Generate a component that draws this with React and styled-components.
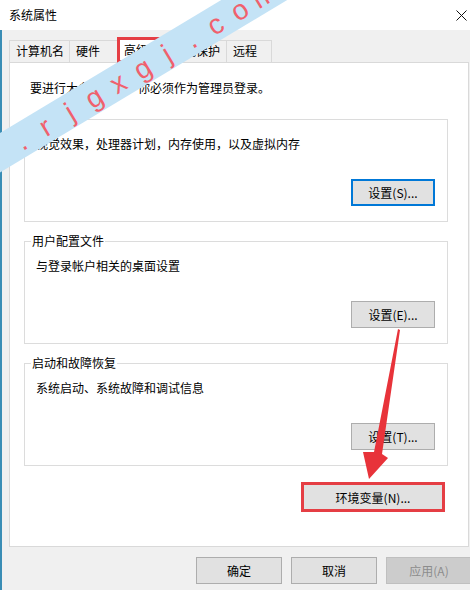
import React from 'react';
import styled, { createGlobalStyle, css } from 'styled-components';

const FONT = `"Noto Sans CJK SC", "Noto Sans", sans-serif`;

const Global = createGlobalStyle`
  html, body { margin: 0; padding: 0; background: #f0f0f0; }
  body { font-family: ${FONT}; }
`;

const Window = styled.div`
  position: relative;
  width: 470px;
  height: 590px;
  overflow: hidden;
  background: #f0f0f0;
  font-family: ${FONT};
  font-size: 12px;
  color: #000;
`;

const TitleBar = styled.div`
  box-sizing: border-box;
  height: 30px;
  background: #fff;
  display: flex;
  align-items: center;
  justify-content: space-between;
  padding: 0 3px 0 9px;
`;

const Title = styled.span`
  font-size: 12px;
  line-height: 16px;
`;

const Body = styled.div`
  box-sizing: border-box;
  height: 560px;
  padding: 7px 0 0 9px;
  box-shadow: inset 2px 0 0 #3a8db5;
`;

const TabRow = styled.div`
  display: flex;
  align-items: flex-end;
  height: 25px;
`;

const Tab = styled.div`
  box-sizing: border-box;
  position: relative;
  flex: none;
  width: ${(p) => p.$w}px;
  height: ${(p) => (p.$active ? 26 : 22)}px;
  margin-right: -1px;
  margin-bottom: ${(p) => (p.$active ? -1 : 0)}px;
  border: 1px solid #d9d9d9;
  border-bottom: none;
  background: ${(p) => (p.$active ? '#fff' : '#f0f0f0')};
  padding: ${(p) => (p.$active ? '2px 0 0 6px' : '0 0 0 6px')};
  line-height: 20px;
  white-space: nowrap;
  z-index: ${(p) => (p.$active ? 2 : 1)};
  ${(p) =>
    p.$marked &&
    css`
      &::after {
        content: '';
        position: absolute;
        left: -1px;
        top: -1px;
        right: -1px;
        bottom: 0;
        border: 3px solid #e53e44;
      }
    `}
`;

const Panel = styled.div`
  box-sizing: border-box;
  position: relative;
  z-index: 1;
  width: 460px;
  height: 485px;
  background: #fff;
  border: 1px solid #d9d9d9;
  padding-top: 17px;
`;

const Notice = styled.div`
  padding-left: 20px;
  line-height: 16px;
  white-space: nowrap;
`;

const Group = styled.fieldset`
  box-sizing: border-box;
  width: 424px;
  min-width: 0;
  margin: ${(p) => (p.$first ? 15 : 11)}px 0 0 14px;
  padding: 0;
  border: 1px solid #dcdcdc;
`;

const Legend = styled.legend`
  margin-left: 6px;
  padding: 0 1px;
  line-height: 16px;
  font-size: 12px;
`;

const Desc = styled.div`
  margin-top: 9px;
  padding-left: 11px;
  line-height: 16px;
  white-space: nowrap;
`;

const ButtonRow = styled.div`
  display: flex;
  justify-content: flex-end;
  margin-top: ${(p) => p.$top}px;
  padding-right: ${(p) => p.$right}px;
  padding-bottom: ${(p) => p.$bottom || 0}px;
`;

const Btn = styled.button`
  box-sizing: border-box;
  flex: none;
  width: ${(p) => p.$w}px;
  height: 27px;
  padding: 0;
  background: #e1e1e1;
  border: 1px solid #adadad;
  font-family: ${FONT};
  font-size: 12px;
  line-height: 16px;
  color: #000;
  ${(p) =>
    p.$default &&
    css`
      border-color: #0078d7;
      box-shadow: inset 0 0 0 1px #0078d7;
    `}
  ${(p) =>
    p.disabled &&
    css`
      background: #cccccc;
      border-color: #bfbfbf;
      color: #8c8c8c;
    `}
`;

const Marked = styled.div`
  position: relative;
  flex: none;
  &::after {
    content: '';
    position: absolute;
    left: -2px;
    top: -2px;
    right: -2px;
    bottom: -1px;
    border: 3px solid #e53e44;
  }
`;

const BottomBar = styled.div`
  display: flex;
  gap: 9px;
  margin-top: 10px;
  padding-left: 187px;
`;

const Band = styled.div`
  box-sizing: border-box;
  position: absolute;
  left: -42px;
  top: 161px;
  width: 560px;
  height: 34px;
  padding-left: 59px;
  transform-origin: 0 50%;
  transform: rotate(-31deg);
  background: #c4e3f6;
  display: flex;
  align-items: center;
  z-index: 10;
  pointer-events: none;
`;

const Mark = styled.span`
  flex: none;
  width: 28.3px;
  text-align: center;
  font-family: "Liberation Sans", Arial, sans-serif;
  font-size: 28px;
  line-height: 34px;
  color: #f0606d;
  transform: translateY(1.5px);
`;

const Overlay = styled.svg`
  position: absolute;
  left: 0;
  top: 0;
  z-index: 8;
  pointer-events: none;
`;

const tabs = [
  { label: '计算机名', w: 61 },
  { label: '硬件', w: 49 },
  { label: '高级', w: 49, active: true },
  { label: '系统保护', w: 62 },
  { label: '远程', w: 46 },
];

const groups = [
  { title: '性能', desc: '视觉效果，处理器计划，内存使用，以及虚拟内存', btn: '设置(S)...', def: true },
  { title: '用户配置文件', desc: '与登录帐户相关的桌面设置', btn: '设置(E)...' },
  { title: '启动和故障恢复', desc: '系统启动、系统故障和调试信息', btn: '设置(T)...' },
];

export default function App() {
  return (
    <>
      <Global />
      <Window>
        <TitleBar>
          <Title>系统属性</Title>
          <svg width="11" height="11" viewBox="0 0 11 11">
            <path d="M0.5 0.5L10.5 10.5M10.5 0.5L0.5 10.5" stroke="#111" strokeWidth="1" fill="none" />
          </svg>
        </TitleBar>
        <Body>
          <TabRow>
            {tabs.map((t) => (
              <Tab key={t.label} $w={t.w} $active={t.active} $marked={t.active}>
                {t.label}
              </Tab>
            ))}
          </TabRow>
          <Panel>
            <Notice>要进行大多数更改，你必须作为管理员登录。</Notice>
            {groups.map((g, i) => (
              <Group key={g.title} $first={i === 0}>
                <Legend>{g.title}</Legend>
                <Desc>{g.desc}</Desc>
                <ButtonRow $top={27} $right={12} $bottom={15}>
                  <Btn $w={84} $default={g.def}>{g.btn}</Btn>
                </ButtonRow>
              </Group>
            ))}
            <ButtonRow $top={18} $right={25}>
              <Marked>
                <Btn $w={140}>环境变量(N)...</Btn>
              </Marked>
            </ButtonRow>
          </Panel>
          <BottomBar>
            <Btn $w={86}>确定</Btn>
            <Btn $w={86}>取消</Btn>
            <Btn $w={86} disabled>应用(A)</Btn>
          </BottomBar>
        </Body>
        <Overlay width="470" height="590" viewBox="0 0 470 590">
          <polygon
            points="398,329 400,330 382,454 388,458 369,479 363,452 374,452"
            fill="#e8333a"
          />
        </Overlay>
        <Band>
          {'.rjgxgj.com'.split('').map((c, i) => (
            <Mark key={i}>{c}</Mark>
          ))}
        </Band>
      </Window>
    </>
  );
}
